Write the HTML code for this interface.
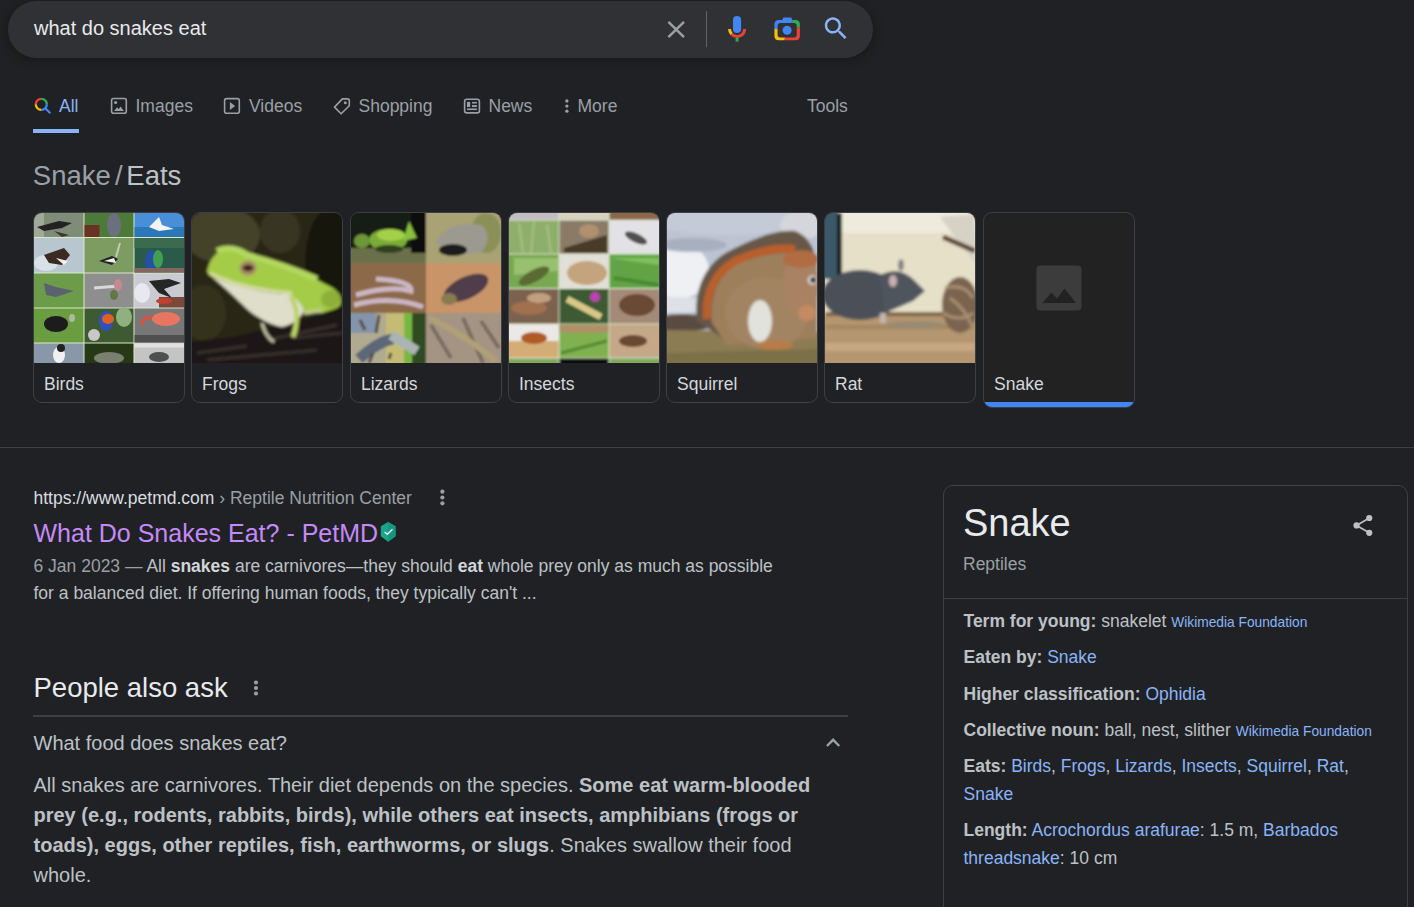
<!DOCTYPE html>
<html><head><meta charset="utf-8">
<style>
*{margin:0;padding:0;box-sizing:border-box}
html,body{width:1414px;height:907px;overflow:hidden;background:#202124;font-family:"Liberation Sans",sans-serif;color:#bdc1c6}
.a{position:absolute;white-space:nowrap}
b{font-weight:bold}
#sb{position:absolute;left:8px;top:1px;width:865px;height:57px;border-radius:28.5px;background:#303134;box-shadow:0 2px 8px 1px rgba(23,23,23,.85)}
.tab{position:absolute;top:94.7px;font-size:17.5px;line-height:22px;color:#9aa0a6}
.card{position:absolute;top:212px;width:152px;height:191px;border:1px solid #3c4043;border-radius:9px;overflow:hidden;background:#202124}
.card .img{position:absolute;left:0;top:0;width:150px;height:150px;overflow:hidden}
.card .lb{position:absolute;left:10px;top:159.7px;font-size:17.5px;line-height:22px;color:#d4d7dc;white-space:nowrap}
.kv{position:absolute;left:963.5px;font-size:17.5px;line-height:27.5px;color:#bdc1c6;white-space:nowrap}
.kv b{color:#bdc1c6}
.lk{color:#8ab4f8}
.sm{font-size:13.75px}
</style></head><body>

<!-- search bar -->
<div id="sb"></div>
<div class="a" style="left:34px;top:16.2px;font-size:20px;line-height:24px;color:#e8eaed">what do snakes eat</div>

<!-- tabs -->
<div class="tab" style="left:59px;color:#8ab4f8">All</div>
<div class="tab" style="left:135.5px">Images</div>
<div class="tab" style="left:249px">Videos</div>
<div class="tab" style="left:358.5px">Shopping</div>
<div class="tab" style="left:488.5px">News</div>
<div class="tab" style="left:577.5px">More</div>
<div class="tab" style="left:807px">Tools</div>
<div class="a" style="left:33px;top:129px;width:46px;height:4px;background:#8ab4f8"></div>

<!-- heading -->
<div class="a" style="left:32.8px;top:158.5px;font-size:27.5px;line-height:34px;color:#9aa0a6">Snake<span style="margin:0 3.7px 0 4.2px">/</span><span style="color:#bdc1c6">Eats</span></div>

<!-- cards -->
<div class="card" style="left:33px"><div class="img" id="i1"><svg width="150" height="150" viewBox="0 0 150 150"><defs><filter id="bl1" x="-10%" y="-10%" width="120%" height="120%"><feGaussianBlur stdDeviation="0.7"/></filter></defs><g filter="url(#bl1)"><rect width="150" height="150" fill="#d8e8c8"/>
<!-- row1 -->
<rect x="0" y="0" width="49.5" height="24" fill="#7f8c78"/>
<rect x="0" y="0" width="10" height="24" fill="#a0a898"/>
<path d="M3,14 L25,8 L38,10 L28,15 L10,18 Z" fill="#222"/>
<path d="M20,18 L35,22 L28,24 Z" fill="#403530"/>
<rect x="50.5" y="0" width="49" height="24" fill="#4e7a38"/>
<rect x="50.5" y="12" width="15" height="12" fill="#6a3020"/>
<ellipse cx="80" cy="12" rx="7" ry="12" fill="#6a7080"/>
<rect x="100.5" y="0" width="49.5" height="24" fill="#4a8ed8"/>
<rect x="100.5" y="14" width="49.5" height="10" fill="#2a78b8"/>
<path d="M115,14 L125,4 L128,12 L140,16 L125,18 Z" fill="#f4f4f4"/>
<!-- row2 -->
<rect x="0" y="25" width="49.5" height="34.5" fill="#b8c6d0"/>
<ellipse cx="12" cy="50" rx="12" ry="8" fill="#d8e0e8"/>
<path d="M10,42 L30,35 L36,42 L28,52 L15,50 Z" fill="#3a2a20"/>
<path d="M22,45 L34,48 L30,52 Z" fill="#f0f0f0"/>
<rect x="50.5" y="25" width="49" height="34.5" fill="#7c9c62"/>
<path d="M65,48 L78,43 L84,46 L78,52 Z" fill="#222"/>
<path d="M70,48 L80,45 L82,50 Z" fill="#f0f0f0"/>
<path d="M82,44 L86,30" stroke="#c8c8b0" stroke-width="2"/>
<rect x="100.5" y="25" width="49.5" height="34.5" fill="#2c5a48"/>
<rect x="100.5" y="25" width="49.5" height="10" fill="#3a6a50"/>
<ellipse cx="118" cy="48" rx="7" ry="11" fill="#2850a8"/>
<ellipse cx="124" cy="46" rx="5" ry="9" fill="#40a050"/>
<rect x="100.5" y="55" width="49.5" height="4.5" fill="#806860"/>
<!-- row3 -->
<rect x="0" y="60.5" width="49.5" height="34" fill="#6c9c4a"/>
<path d="M10,70 L22,74 L40,78 L22,84 L12,82 Z" fill="#5a6270"/>
<rect x="50.5" y="60.5" width="49" height="34" fill="#8e8e8e"/>
<path d="M60,75 L85,73" stroke="#d8d8d8" stroke-width="3"/>
<ellipse cx="84" cy="72" rx="4" ry="6" fill="#c88890"/>
<ellipse cx="80" cy="82" rx="4" ry="5" fill="#607848"/>
<rect x="100.5" y="60.5" width="49.5" height="34" fill="#cacad2"/>
<ellipse cx="108" cy="80" rx="8" ry="10" fill="#e8e8ee"/>
<path d="M115,68 L135,66 L147,70 L130,76 L138,85 L125,80 Z" fill="#262626"/>
<rect x="125" y="84" width="25" height="10.5" fill="#7a4a38"/>
<ellipse cx="130" cy="88" rx="8" ry="3" fill="#c04030"/>
<!-- row4 -->
<rect x="0" y="95.5" width="49.5" height="34" fill="#6a9c40"/>
<ellipse cx="22" cy="111" rx="12" ry="8" fill="#1e1e1e"/>
<ellipse cx="38" cy="105" rx="3" ry="4" fill="#b0b8a0"/>
<rect x="50.5" y="95.5" width="49" height="34" fill="#3e5a32"/>
<ellipse cx="72" cy="108" rx="7" ry="10" fill="#3050c0"/>
<ellipse cx="74" cy="106" rx="6" ry="5" fill="#e06020"/>
<ellipse cx="90" cy="104" rx="8" ry="10" fill="#90b080"/>
<ellipse cx="60" cy="122" rx="6" ry="6" fill="#c8c8c8"/>
<rect x="100.5" y="95.5" width="49.5" height="34" fill="#787878"/>
<ellipse cx="132" cy="106" rx="14" ry="7" fill="#e87460"/>
<path d="M118,104 Q108,104 108,112" stroke="#e05040" stroke-width="3" fill="none"/>
<rect x="100.5" y="122" width="49.5" height="7.5" fill="#505050"/>
<!-- row5 -->
<rect x="0" y="130.5" width="49.5" height="19.5" fill="#8898a8"/>
<ellipse cx="25" cy="142" rx="6" ry="8" fill="#f0f0f0"/>
<ellipse cx="27" cy="135" rx="4" ry="4" fill="#202020"/>
<rect x="50.5" y="130.5" width="49" height="19.5" fill="#283818"/>
<ellipse cx="75" cy="145" rx="15" ry="6" fill="#7a8070"/>
<rect x="100.5" y="130.5" width="49.5" height="19.5" fill="#c4c4c4"/>
<rect x="100.5" y="130.5" width="49.5" height="4" fill="#e0e0e0"/>
<ellipse cx="125" cy="144" rx="10" ry="5" fill="#505050"/></g></svg></div><div class="lb">Birds</div></div>
<div class="card" style="left:191px"><div class="img" id="i2"><svg width="150" height="150" viewBox="0 0 150 150"><defs><filter id="bl2" x="-10%" y="-10%" width="120%" height="120%"><feGaussianBlur stdDeviation="1.7"/></filter></defs><g filter="url(#bl2)"><rect x="-5" y="-5" width="160" height="160" fill="#2a2618"/>
<ellipse cx="30" cy="22" rx="38" ry="28" fill="#44422a"/>
<ellipse cx="88" cy="18" rx="20" ry="22" fill="#383420"/>
<ellipse cx="138" cy="50" rx="25" ry="55" fill="#19170f"/>
<ellipse cx="12" cy="100" rx="22" ry="28" fill="#36301e"/>
<path d="M-5,129 L40,124 C70,118 110,104 155,97 L155,155 L-5,155 Z" fill="#1c1612"/>
<path d="M5,140 L55,133 M75,127 L145,112 M15,147 L125,137 M100,125 L150,120" stroke="#3c3430" stroke-width="2.5"/>
<path d="M16,55 C18,44 28,36 38,35 C45,35 52,38 56,41 C75,46 110,58 133,71 C142,75 150,80 149,90 C148,96 138,97 130,100 L112,98 C105,88 100,82 96,81 C70,80 40,72 20,64 C15,61 14,58 16,55 Z" fill="#a4cc46"/>
<path d="M25,38 C35,33 48,36 55,42 C70,46 100,55 125,66" stroke="#b4d860" stroke-width="6" fill="none"/>
<path d="M20,64 C40,72 70,80 96,81 C104,84 110,92 112,98 C108,106 100,112 90,114 C78,112 64,104 55,96 C45,86 30,72 20,64 Z" fill="#dedecb"/>
<path d="M18,60 C35,70 70,78 100,80" stroke="#d4dc9a" stroke-width="3.5" fill="none"/>
<path d="M99,84 C106,95 106,110 101,124" stroke="#bcd468" stroke-width="5" fill="none"/>
<path d="M70,110 C72,118 76,125 82,129" stroke="#c8c8a8" stroke-width="3" fill="none"/>
<path d="M112,100 L130,97" stroke="#c0cc88" stroke-width="4"/>
<ellipse cx="139" cy="86" rx="10" ry="9" fill="#8eb03a"/>
<ellipse cx="56" cy="55" rx="8.5" ry="7.5" fill="#a88a68"/>
<ellipse cx="56" cy="55" rx="5.5" ry="3.2" fill="#3a2418"/></g></svg></div><div class="lb">Frogs</div></div>
<div class="card" style="left:350px"><div class="img" id="i3"><svg width="150" height="150" viewBox="0 0 150 150"><defs><filter id="bl3" x="-10%" y="-10%" width="120%" height="120%"><feGaussianBlur stdDeviation="1.0"/></filter></defs><g filter="url(#bl3)"><rect x="-5" y="-5" width="80" height="55" fill="#121a12"/>
<rect x="-5" y="35" width="80" height="15" fill="#6a7048"/>
<rect x="60" y="-5" width="15" height="45" fill="#0c0c0c"/>
<ellipse cx="37" cy="27" rx="19" ry="11" fill="#7cac38"/>
<ellipse cx="40" cy="22" rx="14" ry="6" fill="#a4d048"/>
<ellipse cx="11" cy="28" rx="8" ry="7" fill="#6e9838"/>
<path d="M52,28 L58,8 L66,25 Z" fill="#88c040"/>
<ellipse cx="38" cy="36" rx="14" ry="4" fill="#304020"/>
<rect x="75" y="-5" width="80" height="55" fill="#a8a274"/>
<ellipse cx="135" cy="20" rx="15" ry="20" fill="#8a9058"/>
<path d="M85,30 C90,15 110,8 130,12 C140,18 138,35 128,40 L100,42 Z" fill="#9c9a90"/>
<ellipse cx="102" cy="37" rx="14" ry="6" fill="#1e1e1e"/>
<rect x="-5" y="50" width="80" height="50" fill="#8c6a48"/>
<path d="M3,92 Q40,82 72,94 M5,82 Q40,72 60,78 Q62,68 25,66" stroke="#cbb6c2" stroke-width="5" fill="none"/>
<rect x="75" y="50" width="80" height="50" fill="#c89468"/>
<ellipse cx="115" cy="75" rx="24" ry="11" fill="#503c48" transform="rotate(-25 115 75)"/>
<ellipse cx="98" cy="86" rx="8" ry="6" fill="#8a7a50"/>
<rect x="-5" y="100" width="80" height="55" fill="#b0aa90"/>
<rect x="-5" y="100" width="30" height="20" fill="#8494aa"/>
<rect x="35" y="100" width="20" height="55" fill="#c4bc74"/>
<rect x="53" y="100" width="8" height="55" fill="#78b840"/>
<rect x="61" y="100" width="14" height="55" fill="#2e4c22"/>
<path d="M8,146 C20,135 30,128 42,126" stroke="#5c6878" stroke-width="11" fill="none"/>
<path d="M40,122 L66,138" stroke="#aab4b4" stroke-width="10" fill="none"/>
<path d="M25,120 L28,102 M14,117 L9,107 M22,140 L18,150 M40,140 L38,146" stroke="#584c48" stroke-width="3"/>
<rect x="75" y="100" width="80" height="55" fill="#a49484"/>
<path d="M80,112 L100,145 M112,105 L132,150 M130,108 L148,135" stroke="#7c6c60" stroke-width="4"/>
<path d="M78,105 C100,115 120,128 145,148" stroke="#b0a078" stroke-width="6" fill="none"/></g></svg></div><div class="lb">Lizards</div></div>
<div class="card" style="left:508px"><div class="img" id="i4"><svg width="150" height="150" viewBox="0 0 150 150"><defs><filter id="bl4" x="-10%" y="-10%" width="120%" height="120%"><feGaussianBlur stdDeviation="0.8"/></filter></defs><g filter="url(#bl4)"><rect x="-5" y="-5" width="160" height="160" fill="#d8e8c8"/><rect x="-5" y="-5" width="54.5" height="11.7" fill="#c4bcc4"/><rect x="50.5" y="-5" width="49.0" height="11.7" fill="#d8d0c0"/><rect x="100.5" y="-5" width="54.5" height="11.7" fill="#8a6848"/><rect x="-5" y="7.6" width="54.5" height="32.9" fill="#8eae6c"/><rect x="50.5" y="7.6" width="49.0" height="32.9" fill="#8a7a66"/><rect x="100.5" y="7.6" width="54.5" height="32.9" fill="#e2e2e6"/><rect x="-5" y="41.5" width="54.5" height="33.5" fill="#78a850"/><rect x="50.5" y="41.5" width="49.0" height="33.5" fill="#e2ded8"/><rect x="100.5" y="41.5" width="54.5" height="33.5" fill="#62a444"/><rect x="-5" y="76" width="54.5" height="34.5" fill="#7a6250"/><rect x="50.5" y="76" width="49.0" height="34.5" fill="#3c5a32"/><rect x="100.5" y="76" width="54.5" height="34.5" fill="#a48a78"/><rect x="-5" y="111.5" width="54.5" height="33.0" fill="#ece8e6"/><rect x="50.5" y="111.5" width="49.0" height="33.0" fill="#80b050"/><rect x="100.5" y="111.5" width="54.5" height="33.0" fill="#c4a888"/><rect x="-5" y="145.5" width="54.5" height="9.5" fill="#80a860"/><rect x="50.5" y="145.5" width="49.0" height="9.5" fill="#101010"/><rect x="100.5" y="145.5" width="54.5" height="9.5" fill="#80a860"/><path d="M10,10 L14,40 M25,8 L22,40 M38,12 L42,40" stroke="#a8c080" stroke-width="2"/>
<path d="M55,35 L98,22 L98,40 L55,40 Z" fill="#4a3a2a"/>
<ellipse cx="80" cy="18" rx="10" ry="7" fill="#b09070"/>
<ellipse cx="127" cy="25" rx="12" ry="4.5" fill="#505050" transform="rotate(25 127 25)"/>
<path d="M5,45 L49,45 L49,58 L5,62 Z" fill="#98c070"/>
<ellipse cx="25" cy="63" rx="17" ry="6" fill="#5a6a30" transform="rotate(-28 25 63)"/>
<ellipse cx="78" cy="60" rx="20" ry="12" fill="#c4a47c"/>
<path d="M100.5,45 L150,45 L150,52 Z" fill="#80c060"/>
<path d="M105,65 L150,72" stroke="#488a34" stroke-width="4"/>
<ellipse cx="20" cy="95" rx="18" ry="7" fill="#a07050"/>
<ellipse cx="30" cy="85" rx="12" ry="5" fill="#c0a080"/>
<path d="M58,86 L92,104" stroke="#d8c888" stroke-width="7"/>
<circle cx="86" cy="84" r="5" fill="#c040b0"/>
<ellipse cx="128" cy="92" rx="18" ry="11" fill="#6a4a34"/>
<rect x="-5" y="128" width="54.5" height="16.5" fill="#d4ac74"/>
<ellipse cx="25" cy="125" rx="13" ry="6" fill="#b05a28"/>
<rect x="50.5" y="111.5" width="49" height="8" fill="#b09068"/>
<path d="M52,140 L98,128" stroke="#508a30" stroke-width="3"/>
<ellipse cx="124" cy="128" rx="14" ry="6" fill="#6a4a30"/></g></svg></div><div class="lb">Insects</div></div>
<div class="card" style="left:666px"><div class="img" id="i5"><svg width="150" height="150" viewBox="0 0 150 150"><defs><filter id="bl5" x="-10%" y="-10%" width="120%" height="120%"><feGaussianBlur stdDeviation="1.8"/></filter></defs><g filter="url(#bl5)"><rect x="-5" y="-5" width="160" height="160" fill="#bcc4d2"/>
<ellipse cx="60" cy="8" rx="75" ry="14" fill="#c4cad6"/>
<ellipse cx="12" cy="58" rx="30" ry="28" fill="#eef0f4"/>
<ellipse cx="25" cy="32" rx="35" ry="7" fill="#a8b0c0"/>
<ellipse cx="135" cy="12" rx="22" ry="14" fill="#d4d6dc"/>
<ellipse cx="12" cy="92" rx="30" ry="8" fill="#dde0e6"/>
<ellipse cx="15" cy="110" rx="32" ry="9" fill="#5a4c42"/>
<path d="M-5,117 L155,119 L155,155 L-5,155 Z" fill="#8c7c52"/>
<path d="M-5,140 L155,136 L155,155 L-5,155 Z" fill="#7c7048"/>
<path d="M30,108 C26,80 36,52 62,38 C85,26 110,16 128,18 C138,22 142,28 146,36 L150,60 L150,120 L60,128 Z" fill="#675746"/>
<path d="M45,110 C42,82 52,60 72,50 C92,42 112,38 140,40 L150,45 L150,125 L60,132 Z" fill="#9e7f5c"/>
<path d="M40,106 C38,80 48,60 68,48 C90,38 112,34 128,36" stroke="#b95e2a" stroke-width="8" fill="none"/>
<ellipse cx="100" cy="100" rx="42" ry="36" fill="#a28462"/>
<ellipse cx="134" cy="72" rx="18" ry="32" fill="#a88264"/>
<ellipse cx="134" cy="46" rx="18" ry="9" fill="#b06c42"/>
<ellipse cx="93" cy="108" rx="12" ry="21" fill="#e2e2dc"/>
<circle cx="145.5" cy="67" r="4.5" fill="#eeeeee"/>
<circle cx="146" cy="67" r="3" fill="#0a0a0a"/>
<ellipse cx="108" cy="132" rx="18" ry="5" fill="#b87c4a"/>
<ellipse cx="140" cy="100" rx="9" ry="8" fill="#c48a62"/></g></svg></div><div class="lb">Squirrel</div></div>
<div class="card" style="left:824px"><div class="img" id="i6"><svg width="150" height="150" viewBox="0 0 150 150"><defs><filter id="bl6" x="-10%" y="-10%" width="120%" height="120%"><feGaussianBlur stdDeviation="1.4"/></filter></defs><g filter="url(#bl6)"><rect x="-5" y="-5" width="160" height="160" fill="#e6e0c8"/>
<rect x="16" y="-5" width="139" height="25" fill="#eeeadc"/>
<rect x="-5" y="-5" width="18" height="71" fill="#3a5868"/>
<rect x="12" y="0" width="5" height="66" fill="#101418"/>
<polygon points="115,4 150,1 150,50" fill="#d6d2c6"/>
<path d="M118,24 L150,38" stroke="#5a4030" stroke-width="5"/>
<rect x="0" y="99" width="150" height="4" fill="#7a6040"/>
<rect x="-5" y="103" width="160" height="52" fill="#b49670"/>
<rect x="0" y="130" width="150" height="8" fill="#c8a882"/>
<rect x="0" y="112" width="150" height="4" fill="#a48660"/>
<ellipse cx="35" cy="82" rx="38" ry="25" fill="#4c5058"/>
<path d="M55,62 Q75,52 90,68 L100,78 L88,88 L60,100 Z" fill="#50545c"/>
<ellipse cx="76" cy="52" rx="3" ry="6" fill="#8a8088"/>
<ellipse cx="68" cy="68" rx="4" ry="6" fill="#c8b0b0"/>
<rect x="55" y="100" width="6" height="10" fill="#c0b8b0"/>
<ellipse cx="135" cy="92" rx="18" ry="28" fill="#7a6450"/>
<path d="M120,75 Q140,70 148,85 M118,100 Q135,110 148,100 M125,85 Q140,95 148,115" stroke="#a89070" stroke-width="3" fill="none"/>
<ellipse cx="90" cy="112" rx="30" ry="4" fill="#9a8a70"/></g></svg></div><div class="lb">Rat</div></div>
<div class="card" style="left:983px;height:196px;background:#222"><div class="lb">Snake</div><div style="position:absolute;left:0;bottom:0;width:150px;height:5px;background:#4285f4"></div></div>

<!-- separator -->
<div class="a" style="left:0;top:447px;width:1414px;height:1px;background:#3c4043"></div>

<!-- result -->
<div class="a" style="left:33.5px;top:486.7px;font-size:17.5px;line-height:22px;color:#dadce0">https://www.petmd.com<span style="color:#9aa0a6"> › Reptile Nutrition Center</span></div>
<div class="a" style="left:33.5px;top:518.2px;font-size:25px;line-height:30px;color:#c58af9">What Do Snakes Eat? - PetMD</div>
<div class="a" style="left:33.5px;top:552.7px;font-size:17.5px;line-height:27.5px;color:#bdc1c6"><span style="color:#9aa0a6">6 Jan 2023 — </span>All <b style="color:#d2d5d9">snakes</b> are carnivores—they should <b style="color:#d2d5d9">eat</b> whole prey only as much as possible<br>for a balanced diet. If offering human foods, they typically can't ...</div>

<!-- PAA -->
<div class="a" style="left:33.5px;top:670.6px;font-size:27.5px;line-height:34px;color:#e8eaed">People also ask</div>
<div class="a" style="left:33px;top:715px;width:815px;height:2px;background:#3c4043"></div>
<div class="a" style="left:33.5px;top:730.9px;font-size:20px;line-height:24px;color:#bdc1c6">What food does snakes eat?</div>
<div class="a" style="left:33.5px;top:769.8px;font-size:20px;line-height:30px;color:#bdc1c6">All snakes are carnivores. Their diet depends on the species. <b>Some eat warm-blooded</b><br><b>prey (e.g., rodents, rabbits, birds), while others eat insects, amphibians (frogs or</b><br><b>toads), eggs, other reptiles, fish, earthworms, or slugs</b>. Snakes swallow their food<br>whole.</div>

<!-- knowledge panel -->
<div class="a" style="left:943px;top:485px;width:465px;height:480px;border:1px solid #3c4043;border-radius:10px"></div>
<div class="a" style="left:944px;top:598px;width:463px;height:1px;background:#3c4043"></div>
<div class="a" style="left:963px;top:500.9px;font-size:38px;line-height:44px;color:#e8eaed">Snake</div>
<div class="a" style="left:963px;top:553.3px;font-size:17.5px;line-height:22px;color:#9aa0a6">Reptiles</div>

<div class="kv" style="top:607.7px"><b>Term for young:</b> snakelet <span class="lk sm">Wikimedia Foundation</span></div>
<div class="kv" style="top:643.8px"><b>Eaten by:</b> <span class="lk">Snake</span></div>
<div class="kv" style="top:680.5px"><b>Higher classification:</b> <span class="lk">Ophidia</span></div>
<div class="kv" style="top:716.6px"><b>Collective noun:</b> ball, nest, slither <span class="lk sm">Wikimedia Foundation</span></div>
<div class="kv" style="top:752px;line-height:28px"><b>Eats:</b> <span class="lk">Birds</span>, <span class="lk">Frogs</span>, <span class="lk">Lizards</span>, <span class="lk">Insects</span>, <span class="lk">Squirrel</span>, <span class="lk">Rat</span>,<br><span class="lk">Snake</span></div>
<div class="kv" style="top:816px;line-height:28px"><b>Length:</b> <span class="lk">Acrochordus arafurae</span>: 1.5 m, <span class="lk">Barbados</span><br><span class="lk">threadsnake</span>: 10 cm</div>


<svg class="a" style="left:0;top:0;z-index:5" width="1414" height="907" viewBox="0 0 1414 907">
<defs>
<clipPath id="lensclip"><path clip-rule="evenodd" d="M779.2,19.9 L782.2,19.9 L783.4,17.6 L791.2,17.6 L792.4,19.9 L795.4,19.9 Q799.9,19.9 799.9,24.4 L799.9,35.7 Q799.9,40.2 795.4,40.2 L778.9,40.2 Q774.4,40.2 774.4,35.7 L774.4,24.4 Q774.4,19.9 779.2,19.9 Z M780.4,23 L794,23 Q796.7,23 796.7,25.7 L796.7,34.7 Q796.7,37.4 794,37.4 L780.4,37.4 Q777.6,37.4 777.6,34.7 L777.6,25.7 Q777.6,23 780.4,23 Z"/></clipPath>
</defs>
<!-- close X -->
<path d="M668.4,21.9 L684,37.1 M684,21.9 L668.4,37.1" stroke="#9aa0a6" stroke-width="2.5" fill="none"/>
<rect x="706" y="11" width="1" height="36" fill="#5f6368"/>
<!-- mic -->
<rect x="733" y="16" width="8.1" height="17" rx="4.05" fill="#4285f4"/>
<path d="M729.55,28.9 A7.5,7.5 0 0 0 731.65,34.11" stroke="#fbbc04" stroke-width="3" fill="none"/>
<path d="M731.65,34.11 A7.5,7.5 0 0 0 744.55,28.9" stroke="#ea4335" stroke-width="3" fill="none"/>
<rect x="735.6" y="37.6" width="2.9" height="4" fill="#34a853"/>
<!-- lens -->
<g clip-path="url(#lensclip)">
<polygon points="787.1,29.5 736.3,27.9 730,-30 830,-30 811.5,-8.9" fill="#4285f4"/>
<polygon points="787.1,29.5 811.5,-8.9 850,-30 850,19.1 838.3,19.1" fill="#34a853"/>
<polygon points="787.1,29.5 838.3,19.1 850,19.1 850,80 775.9,72.3" fill="#ea4335"/>
<polygon points="787.1,29.5 775.9,72.3 730,80 736.3,27.9" fill="#fbbc04"/>
</g>
<circle cx="787.1" cy="30.2" r="4.5" fill="#4285f4"/>
<!-- search -->
<g transform="translate(821.1,13.6) scale(1.24)"><path fill="#8ab4f8" d="M15.5 14h-.79l-.28-.27C15.41 12.59 16 11.11 16 9.5 16 5.91 13.09 3 9.5 3S3 5.91 3 9.5 5.91 16 9.5 16c1.610 0 3.09-.59 4.230-1.570l.27.28v.79l5 4.99L20.49 19l-4.99-5zm-6 0C7.01 14 5 11.99 5 9.5S7.01 5 9.5 5 14 7.01 14 9.5 11.99 14 9.5 14z"/></g>

<!-- All icon -->
<path d="M35.8,104.3 A5.5,5.5 0 0 1 41.3,98.8" stroke="#ea4335" stroke-width="2.3" fill="none"/>
<path d="M41.3,98.8 A5.5,5.5 0 0 1 46.8,104.3" stroke="#34a853" stroke-width="2.3" fill="none"/>
<path d="M46.8,104.3 A5.5,5.5 0 0 1 41.3,109.8" stroke="#4285f4" stroke-width="2.3" fill="none"/>
<path d="M41.3,109.8 A5.5,5.5 0 0 1 35.8,104.3" stroke="#fbbc04" stroke-width="2.3" fill="none"/>
<path d="M45.3,108.3 L50.3,113.3" stroke="#4285f4" stroke-width="2.3" fill="none"/>
<g fill="none" stroke="#9aa0a6" stroke-width="1.6">
<rect x="111.6" y="98.5" width="14.7" height="14.8" rx="2"/>
<rect x="224.6" y="98.6" width="14.7" height="14.7" rx="2"/>
<path d="M342.4,98.9 L347.4,98.9 Q349.3,98.9 349.3,100.8 L349.3,105.8 L341.1,113.8 L334.5,107.1 Z" stroke-linejoin="round"/>
<rect x="464.6" y="99.2" width="14.8" height="13.7" rx="2.2"/>
</g>
<g fill="#9aa0a6">
<circle cx="115.6" cy="102.5" r="1.6"/>
<polygon points="114,110.9 117.2,107.3 118.7,109.2 120.5,106.5 123.9,110.9"/>
<polygon points="229.9,101.9 235.1,105.9 229.9,109.9"/>
<circle cx="345.3" cy="102.7" r="1.5"/>
<rect x="467" y="101.9" width="3.2" height="5.1"/>
<rect x="472" y="101.9" width="4.9" height="1.6"/>
<rect x="472" y="105.1" width="4.9" height="1.9"/>
<rect x="467" y="108.4" width="9.9" height="1.7"/>
<circle cx="566.9" cy="101" r="1.65"/>
<circle cx="566.9" cy="106.1" r="1.65"/>
<circle cx="566.9" cy="111.2" r="1.65"/>
<!-- result dots -->
<circle cx="442.4" cy="491.7" r="2.1"/>
<circle cx="442.4" cy="497.5" r="2.1"/>
<circle cx="442.4" cy="503.3" r="2.1"/>
<!-- paa dots -->
<circle cx="256" cy="682.5" r="2.1"/>
<circle cx="256" cy="688" r="2.1"/>
<circle cx="256" cy="693.5" r="2.1"/>
</g>
<!-- shield -->
<polygon points="388.1,522 395.5,526.3 395.5,536.3 388.1,541.7 380.8,536.3 380.8,526.3" fill="#1aa58a"/>
<polygon points="388.1,522 395.5,526.3 395.5,536.3 388.1,541.7" fill="#17967e"/>
<path d="M384.6,532 L387.3,534.3 L392.5,529.3" stroke="#e8f5f0" stroke-width="1.3" fill="none"/>
<!-- chevron -->
<path d="M826.9,746 L833.1,739.8 L839.3,746" stroke="#9aa0a6" stroke-width="2.4" fill="none"/>
<!-- share -->
<g fill="#bdc1c6"><circle cx="1369.25" cy="518" r="3.1"/><circle cx="1356.55" cy="525.4" r="3.1"/><circle cx="1369.25" cy="532.8" r="3.1"/></g>
<path d="M1369.25,518 L1356.55,525.4 L1369.25,532.8" stroke="#bdc1c6" stroke-width="1.7" fill="none"/>
<!-- snake placeholder -->
<rect x="1036.5" y="265.5" width="45" height="45" rx="4" fill="#3c3c3c"/>
<polygon points="1042.3,303 1051.5,292.5 1057,298.5 1064.5,288.5 1076,303" fill="#222"/>
</svg>

</body></html>
